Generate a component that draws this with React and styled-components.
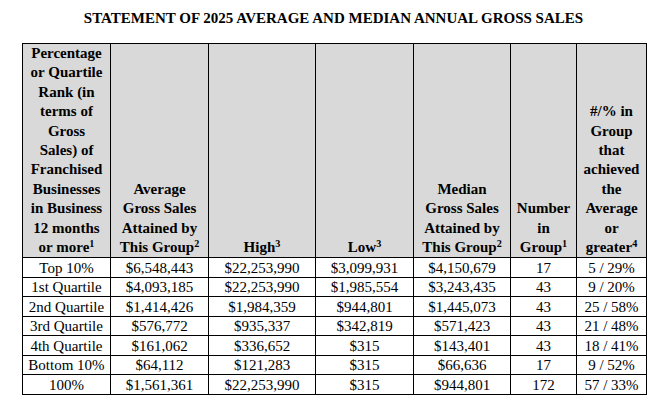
import React from "react";
import styled, { createGlobalStyle } from "styled-components";

const GlobalStyle = createGlobalStyle`
  html, body {
    margin: 0;
    padding: 0;
    background: #ffffff;
  }
  body {
    font-family: "Liberation Serif", "Times New Roman", serif;
    color: #000;
  }
`;

const Page = styled.div`
  width: 663px;
  padding: 9px 0 0 22px;
  box-sizing: border-box;
`;

const Title = styled.h1`
  width: 623px;
  margin: 0 0 16px;
  font-size: 15px;
  line-height: 18px;
  font-weight: bold;
  text-align: center;
`;

const Table = styled.table`
  width: 624px;
  border-collapse: collapse;
  table-layout: fixed;
  font-size: 15px;
`;

const HeadCell = styled.th`
  background: #d9d9d9;
  border: 1.5px solid #000;
  padding: 0 1px;
  vertical-align: bottom;
  text-align: center;
  font-weight: bold;
  line-height: 19.4px;
  height: 213px;
  white-space: nowrap;
`;

const Cell = styled.td`
  border: 1.5px solid #000;
  padding: 0 2px;
  height: 18.5px;
  line-height: 18px;
  text-align: center;
  white-space: nowrap;
`;

const Note = styled.sup`
  font-size: 0.68em;
  line-height: 0;
  vertical-align: 0.5em;
`;

const widths = [88, 98, 107, 98, 97, 66, 70];

const headers = [
  ["Percentage", "or Quartile", "Rank (in", "terms of", "Gross", "Sales) of", "Franchised", "Businesses", "in Business", "12 months", ["or more", "1"]],
  ["Average", "Gross Sales", "Attained by", ["This Group", "2"]],
  [["High", "3"]],
  [["Low", "3"]],
  ["Median", "Gross Sales", "Attained by", ["This Group", "2"]],
  ["Number", "in", ["Group", "1"]],
  ["#/% in", "Group", "that", "achieved", "the", "Average", "or", ["greater", "4"]],
];

const rows = [
  ["Top 10%", "$6,548,443", "$22,253,990", "$3,099,931", "$4,150,679", "17", "5 / 29%"],
  ["1st Quartile", "$4,093,185", "$22,253,990", "$1,985,554", "$3,243,435", "43", "9 / 20%"],
  ["2nd Quartile", "$1,414,426", "$1,984,359", "$944,801", "$1,445,073", "43", "25 / 58%"],
  ["3rd Quartile", "$576,772", "$935,337", "$342,819", "$571,423", "43", "21 / 48%"],
  ["4th Quartile", "$161,062", "$336,652", "$315", "$143,401", "43", "18 / 41%"],
  ["Bottom 10%", "$64,112", "$121,283", "$315", "$66,636", "17", "9 / 52%"],
  ["100%", "$1,561,361", "$22,253,990", "$315", "$944,801", "172", "57 / 33%"],
];

const HeadLine = ({ line }) =>
  Array.isArray(line) ? (
    <div>
      {line[0]}
      <Note>{line[1]}</Note>
    </div>
  ) : (
    <div>{line}</div>
  );

const App = () => {
  return (
    <Page>
      <GlobalStyle />
      <Title>STATEMENT OF 2025 AVERAGE AND MEDIAN ANNUAL GROSS SALES</Title>
      <Table>
        <colgroup>
          {widths.map((w, i) => (
            <col key={i} style={{ width: w }} />
          ))}
        </colgroup>
        <thead>
          <tr>
            {headers.map((lines, i) => (
              <HeadCell key={i}>
                {lines.map((line, j) => (
                  <HeadLine key={j} line={line} />
                ))}
              </HeadCell>
            ))}
          </tr>
        </thead>
        <tbody>
          {rows.map((row, i) => (
            <tr key={i}>
              {row.map((v, j) => (
                <Cell key={j}>{v}</Cell>
              ))}
            </tr>
          ))}
        </tbody>
      </Table>
    </Page>
  );
};

export default App;
